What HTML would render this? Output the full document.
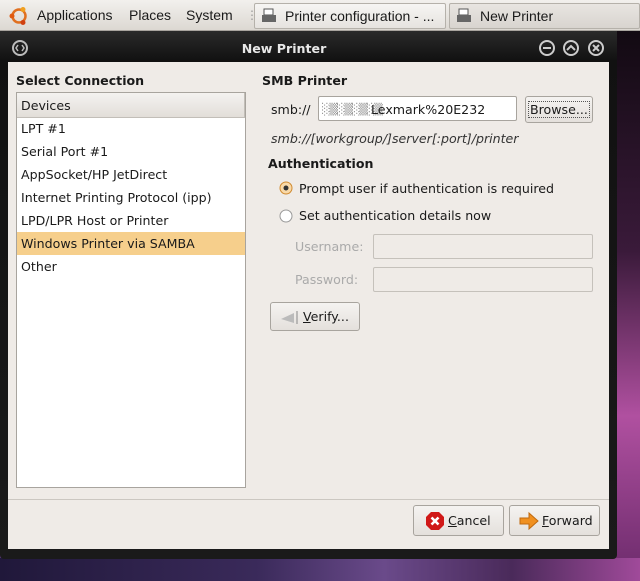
<!DOCTYPE html>
<html><head><style>
*{margin:0;padding:0;box-sizing:border-box}
body{width:640px;height:581px;overflow:hidden;position:relative;font-family:"DejaVu Sans","Liberation Sans",sans-serif;font-size:12.6px;line-height:17px;color:#1a1a1a;background:linear-gradient(180deg,#1a0f1e 0%,#2a1838 60%,#5a3a7a 100%)}
.abs{position:absolute}
.panel{left:0;top:0;width:640px;height:31px;background:linear-gradient(#f2f0ed,#dcd8d2);border-bottom:1px solid #a8a49e}
.space{left:616px;top:31px;width:24px;height:550px;background:linear-gradient(180deg,#120a12,#3a1a3a 40%,#b050a0 70%,#6a2a6a)}
.bottom{left:0;top:558px;width:640px;height:23px;background:linear-gradient(90deg,#20183a,#3a2a5a 40%,#6a4a8a 60%,#4a2a5a 80%,#a04a9a)}
.frame{left:0;top:31px;width:617px;height:528px;background:linear-gradient(180deg,#2a2a2a,#111 30px,#1a1a1a);border-radius:0 0 4px 4px}
.content{left:8px;top:62px;width:601px;height:487px;background:#efebe7}
.tab{top:3px;height:26px;border:1px solid #b5b1aa;border-radius:2px;background:linear-gradient(#f6f5f3,#e6e3df);font-size:14px;line-height:24px;padding-left:30px;font-family:"Liberation Sans",sans-serif}
.pl{font-family:"Liberation Sans",sans-serif;font-size:14px;line-height:16px}
.b{font-weight:bold}
.list{left:16px;top:92px;width:230px;height:396px;background:#fff;border:1px solid #a8a49e}
.row{position:absolute;left:4px}
.btn{border:1px solid #a8a49e;border-radius:3px;background:linear-gradient(#f5f3f1,#e4e0dc)}
.entry{background:#fff;border:1px solid #a8a49e;border-radius:2px}
.dis{background:#efebe7;border:1px solid #c5c1bb;border-radius:2px}
</style></head><body>
<div class="abs space"></div>
<div class="abs bottom"></div>
<div class="abs panel"></div>
<svg class="abs" style="left:8px;top:5px" width="22" height="22" viewBox="0 0 22 22"><circle cx="11" cy="11" r="6.5" fill="none" stroke="#e07020" stroke-width="2.5"/><circle cx="4" cy="11" r="2.5" fill="#e05a10"/><circle cx="15" cy="4.5" r="2.5" fill="#f0a020"/><circle cx="15" cy="17.5" r="2.5" fill="#d04010"/></svg>
<div class="abs pl" style="left:37px;top:7px">Applications</div>
<div class="abs pl" style="left:129px;top:7px">Places</div>
<div class="abs pl" style="left:186px;top:7px">System</div>
<div class="abs" style="left:246px;top:7px;font-size:12px;color:#999">⋮</div>
<div class="abs tab" style="left:254px;width:192px">Printer configuration - ...</div>
<div class="abs tab" style="left:449px;width:191px;background:linear-gradient(#e8e5e1,#d8d4cf)">New Printer</div>
<svg class="abs" style="left:261px;top:8px" width="16" height="16"><rect x="3" y="1" width="9" height="6" fill="#fff" stroke="#555"/><rect x="1" y="7" width="14" height="7" fill="#666"/></svg>
<svg class="abs" style="left:456px;top:8px" width="16" height="16"><rect x="3" y="1" width="9" height="6" fill="#fff" stroke="#555"/><rect x="1" y="7" width="14" height="7" fill="#666"/></svg>
<div class="abs frame"></div>
<svg class="abs" style="left:11px;top:39px" width="18" height="18"><circle cx="9" cy="9" r="7" fill="none" stroke="#bbb" stroke-width="2"/><path d="M7 6 L5 9 L7 12 M11 6 L13 9 L11 12" stroke="#bbb" fill="none" stroke-width="1.5"/></svg>
<div class="abs b" style="left:0;width:568px;top:40px;text-align:center;color:#e8e8e8">New Printer</div>
<svg class="abs" style="left:538px;top:38px" width="72" height="20"><g fill="none" stroke="#ccc" stroke-width="2"><circle cx="9" cy="10" r="7"/><path d="M5 10h8"/><circle cx="33" cy="10" r="7"/><path d="M29 12l4-4 4 4"/><circle cx="58" cy="10" r="7"/><path d="M55 7l6 6M61 7l-6 6"/></g></svg>
<div class="abs content"></div>
<div class="abs b" style="left:16px;top:72px">Select Connection</div>
<div class="abs list">
<div style="position:absolute;left:0;top:0;width:228px;height:25px;background:linear-gradient(#f4f2f0,#e2ded9);border-bottom:1px solid #c2beb8;border-right:1px solid #c2beb8"></div>
<div class="row" style="top:4px">Devices</div>
<div class="row" style="top:27px">LPT #1</div>
<div class="row" style="top:50px">Serial Port #1</div>
<div class="row" style="top:73px">AppSocket/HP JetDirect</div>
<div class="row" style="top:96px">Internet Printing Protocol (ipp)</div>
<div class="row" style="top:119px">LPD/LPR Host or Printer</div>
<div style="position:absolute;left:0;top:139px;width:228px;height:23px;background:#f6cf8c"></div>
<div class="row" style="top:142px">Windows Printer via SAMBA</div>
<div class="row" style="top:165px">Other</div>
</div>
<div class="abs b" style="left:262px;top:72px">SMB Printer</div>
<div class="abs" style="left:271px;top:101px">smb://</div>
<div class="abs entry" style="left:318px;top:96px;width:199px;height:25px"></div>
<div class="abs" style="left:322px;top:101px;color:#999;font-size:11px;letter-spacing:-1px">░▒░▒░▒░▒</div>
<div class="abs" style="left:371px;top:101px">Lexmark%20E232</div>
<div class="abs btn" style="left:525px;top:96px;width:68px;height:27px;padding:4px 0 0 3px"><span style="outline:1px dotted #555;padding:0 1px">Browse...</span></div>
<div class="abs" style="left:271px;top:130px;font-style:italic;color:#333">smb://[workgroup/]server[:port]/printer</div>
<div class="abs b" style="left:268px;top:155px">Authentication</div>
<svg class="abs" style="left:279px;top:181px" width="14" height="14"><circle cx="7" cy="7" r="6" fill="#f9d9a8" stroke="#d08a30"/><circle cx="7" cy="7" r="2.5" fill="#333"/></svg>
<div class="abs" style="left:299px;top:180px">Prompt user if authentication is required</div>
<svg class="abs" style="left:279px;top:209px" width="14" height="14"><circle cx="7" cy="7" r="6" fill="#fff" stroke="#999"/></svg>
<div class="abs" style="left:299px;top:207px">Set authentication details now</div>
<div class="abs" style="left:295px;top:238px;color:#aaa">Username:</div>
<div class="abs dis" style="left:373px;top:234px;width:220px;height:25px"></div>
<div class="abs" style="left:295px;top:271px;color:#aaa">Password:</div>
<div class="abs dis" style="left:373px;top:267px;width:220px;height:25px"></div>
<div class="abs btn" style="left:270px;top:302px;width:90px;height:29px;padding:5px 0 0 32px"><u>V</u>erify...</div>
<svg class="abs" style="left:280px;top:309px" width="22" height="16"><path d="M1 10 L14 4 L14 14 Z" fill="#bbb"/><path d="M17 2v13" stroke="#888"/></svg>
<div class="abs" style="left:8px;top:499px;width:601px;height:1px;background:#cbc7c1"></div>
<div class="abs btn" style="left:413px;top:505px;width:91px;height:31px;padding:6px 0 0 34px"><u>C</u>ancel</div>
<svg class="abs" style="left:425px;top:511px" width="20" height="20"><path d="M6 1h8l5 5v8l-5 5H6l-5-5V6z" fill="#d01818"/><path d="M6.5 6.5l7 7M13.5 6.5l-7 7" stroke="#fff" stroke-width="2.6"/></svg>
<div class="abs btn" style="left:509px;top:505px;width:91px;height:31px;padding:6px 0 0 32px"><u>F</u>orward</div>
<svg class="abs" style="left:518px;top:511px" width="22" height="20"><path d="M2 7h9V2l9 8-9 8v-5H2z" fill="#f09020" stroke="#c06a10"/></svg>
</body></html>
